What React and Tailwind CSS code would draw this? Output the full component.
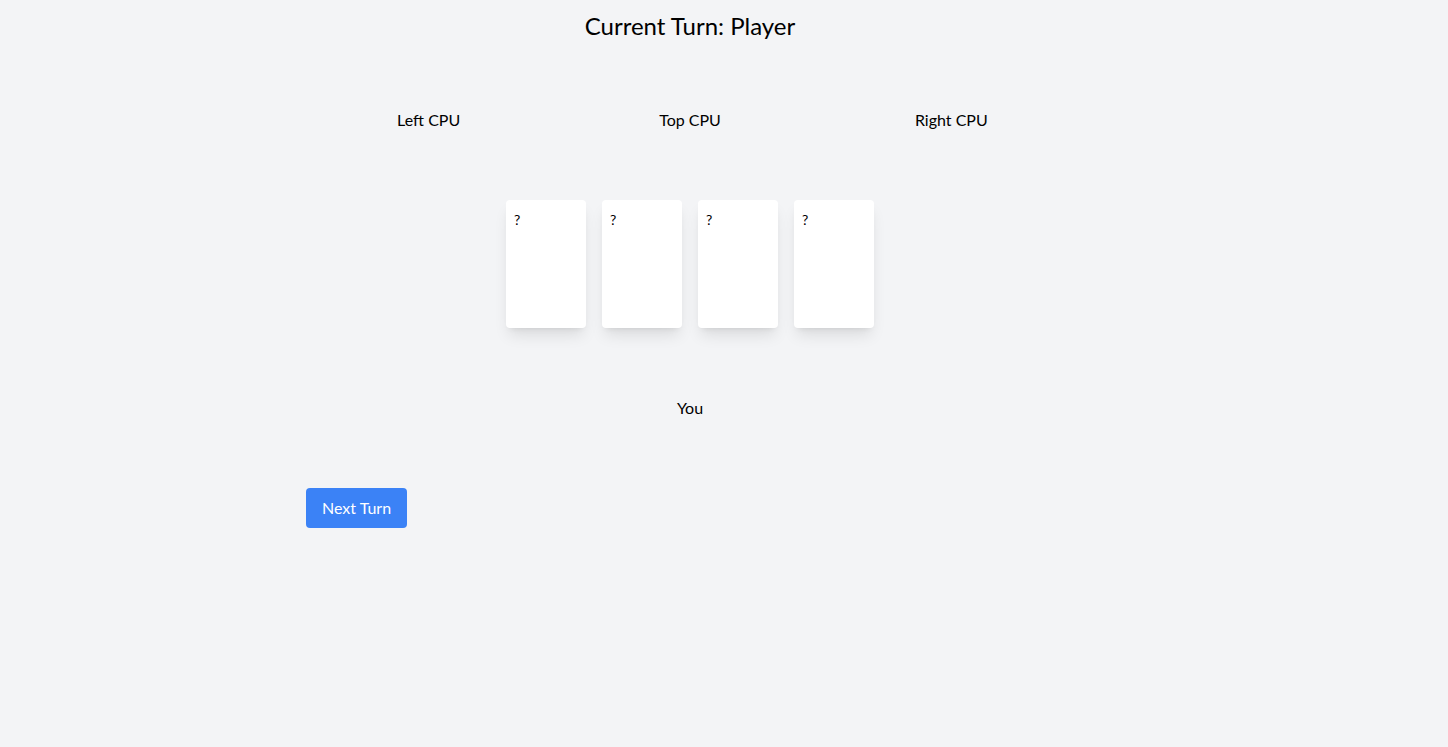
export default function App() {
  const cards = [0, 1, 2, 3];
  return (
    <div className="min-h-screen bg-[#f3f4f6] text-black" style={{ fontFamily: 'Lato, sans-serif' }}>
      <div className="w-[768px] ml-[306px] pt-[10px]">
        <h1 className="text-2xl text-center leading-8">Current Turn: Player</h1>
        <div className="grid grid-cols-3 gap-4 mt-[66px]">
          <div className="text-center leading-6">Left CPU</div>
          <div className="text-center leading-6">Top CPU</div>
          <div className="text-center leading-6">Right CPU</div>
        </div>
        <div className="flex justify-center gap-4 mt-[68px]">
          {cards.map((c) => (
            <div key={c} className="w-20 h-32 bg-white rounded shadow-lg p-2 text-sm leading-6">
              ?
            </div>
          ))}
        </div>
        <div className="text-center leading-6 mt-[68px]">You</div>
        <div className="mt-[68px]">
          <button className="bg-[#3b82f6] text-white rounded px-4 h-10 leading-6">Next Turn</button>
        </div>
      </div>
    </div>
  );
}
